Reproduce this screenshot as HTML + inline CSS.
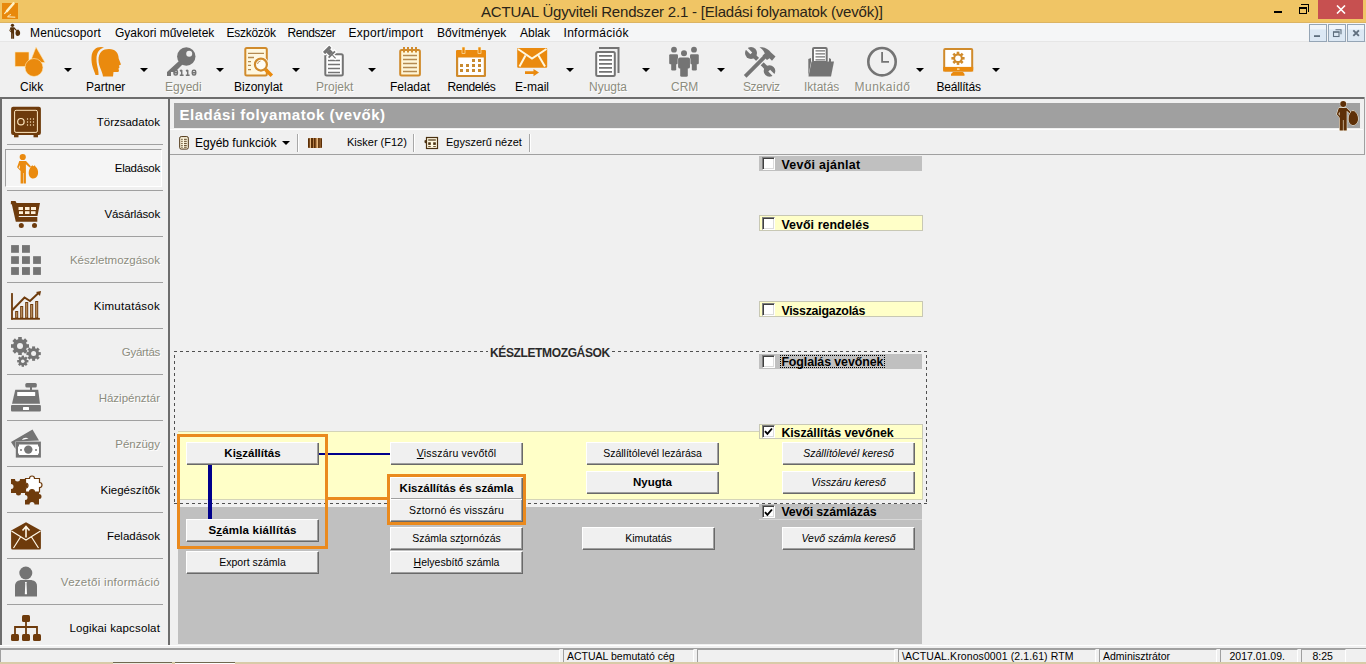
<!DOCTYPE html>
<html><head><meta charset="utf-8"><style>
*{margin:0;padding:0;box-sizing:border-box}
html,body{width:1366px;height:664px;overflow:hidden;background:#f0f0f0;font-family:"Liberation Sans",sans-serif;color:#000}
.a{position:absolute}
.t{position:absolute;white-space:nowrap}
#title{left:0;top:0;width:1366px;height:22px;background:#f0c565}
#menubar{left:0;top:23px;width:1366px;height:18px;background:#f5f6f7}
#toolbar{left:0;top:41px;width:1366px;height:56px;background:#f0f0f0;border-top:1px solid #e6e6e6}
.mi{font-size:12px;top:26px;color:#000}
.tl{font-size:12px;top:80px;color:#000}
.tl.dis{color:#8c8c7e;text-shadow:1px 1px 0 #fff}
.dd{width:0;height:0;border-left:4px solid transparent;border-right:4px solid transparent;border-top:4px solid #000;top:68px}
.mdi{top:24px;width:18px;height:17.5px;background:linear-gradient(#f0f5fa 0,#f0f5fa 25%,#dce8f4 30%,#dce8f4 100%);border:1px solid #95a5b5}
.sb{left:7px;width:156px;height:1px;background:#a0a0a0}
.sl{font-size:11.5px;right:1206px;text-align:right}
.sl.dis{color:#8c8c7e;text-shadow:1px 1px 0 #fff}
.btn{position:absolute;background:#f0f0f0;border-top:1px solid #fff;border-left:1px solid #fff;box-shadow:inset -1px -1px 0 #a0a0a0, 1px 1px 0 #696969;font-size:10.5px;text-align:center;white-space:nowrap;line-height:21px;height:22px}
.btn.b{font-weight:bold;font-size:11.5px}
.btn.i{font-style:italic}
.btn u{text-decoration-thickness:1px;text-underline-offset:1px}
.hdr{position:absolute;left:759px;width:163px;height:16px;font-weight:bold;font-size:12.8px;line-height:15px;padding-left:22px;white-space:nowrap}
.hdr.g{background:#c0c0c0}
.hdr.y{background:#ffffc8;border:1px solid #c8c8b0}
.cb{position:absolute;left:762px;width:13px;height:13px;background:#fff;border-top:1px solid #808080;border-left:1px solid #808080;border-right:1px solid #fff;border-bottom:1px solid #fff;box-shadow:inset 1px 1px 0 #404040, inset -1px -1px 0 #dcdcdc}
.ht{left:781.4px;font-weight:bold;font-size:12.4px;color:#000}
.st{position:absolute;top:649px;height:14px;border-top:1px solid #a0a0a0;border-left:1px solid #a0a0a0;border-right:1px solid #fff;border-bottom:1px solid #fff;font-size:10.5px;line-height:12px;padding-left:3px;white-space:nowrap}
</style></head><body>
<!-- TITLE BAR -->
<div id="title" class="a"></div>
<div class="a" style="left:0;top:22px;width:1366px;height:1px;background:#dcb463"></div>
<div class="a" style="left:2px;top:3px;width:16px;height:16px;background:#e8890c"></div>
<div class="t" style="left:481px;top:2.6px;font-size:15px;letter-spacing:-0.2px;color:#2a2418">ACTUAL Ügyviteli Rendszer 2.1 - [Eladási folyamatok (vevők)]</div>
<div class="a" style="left:1274px;top:11px;width:8px;height:2px;background:#000"></div>
<div class="a" style="left:1299px;top:6.5px;width:8px;height:7px;border:1px solid #000;border-top-width:2px"></div>
<div class="a" style="left:1301px;top:4px;width:8px;height:8px;border-top:1px solid #000;border-right:1px solid #000"></div>
<div class="a" style="left:1318px;top:0;width:45px;height:19px;background:#c75050"></div>
<svg class="a" style="left:1336px;top:5px" width="10" height="9"><path d="M1 0.5L9 8.5M9 0.5L1 8.5" stroke="#fff" stroke-width="1.6"/></svg>
<!-- MENU BAR -->
<div id="menubar" class="a"></div>
<div class="t mi" style="left:30px;letter-spacing:0.15px">Menücsoport</div>
<div class="t mi" style="left:115px">Gyakori műveletek</div>
<div class="t mi" style="left:226.5px;letter-spacing:-0.28px">Eszközök</div>
<div class="t mi" style="left:287.5px;letter-spacing:-0.45px">Rendszer</div>
<div class="t mi" style="left:348.5px;letter-spacing:0.27px">Export/import</div>
<div class="t mi" style="left:437px">Bővítmények</div>
<div class="t mi" style="left:520px">Ablak</div>
<div class="t mi" style="left:563.5px;letter-spacing:0.3px">Információk</div>
<!-- TOOLBAR -->
<div id="toolbar" class="a"></div>
<div class="a mdi" style="left:1309px"></div>
<div class="a mdi" style="left:1328px"></div>
<div class="a mdi" style="left:1347px"></div>
<div class="t tl" style="left:20px">Cikk</div>
<div class="t tl" style="left:86px">Partner</div>
<div class="t tl dis" style="left:165px">Egyedi</div>
<div class="t tl" style="left:234px">Bizonylat</div>
<div class="t tl dis" style="left:316px">Projekt</div>
<div class="t tl" style="left:390px">Feladat</div>
<div class="t tl" style="left:447.5px;letter-spacing:-0.35px">Rendelés</div>
<div class="t tl" style="left:515px">E-mail</div>
<div class="t tl dis" style="left:589px">Nyugta</div>
<div class="t tl dis" style="left:671px">CRM</div>
<div class="t tl dis" style="left:743px;letter-spacing:-0.4px">Szerviz</div>
<div class="t tl dis" style="left:804px">Iktatás</div>
<div class="t tl dis" style="left:854.5px;letter-spacing:0.5px">Munkaidő</div>
<div class="t tl" style="left:936.5px;letter-spacing:-0.2px">Beállítás</div>
<div class="a dd" style="left:64px"></div>
<div class="a dd" style="left:140px"></div>
<div class="a dd" style="left:216px"></div>
<div class="a dd" style="left:292px"></div>
<div class="a dd" style="left:368px"></div>
<div class="a dd" style="left:566px"></div>
<div class="a dd" style="left:642px"></div>
<div class="a dd" style="left:717px"></div>
<div class="a dd" style="left:916px"></div>
<div class="a dd" style="left:992px"></div>
<div class="a" style="left:0;top:97px;width:1365px;height:2px;background:#6d6d6d"></div>
<!-- SIDEBAR -->
<div class="a" style="left:0;top:99px;width:2px;height:546px;background:#6d6d6d"></div>
<div class="a" style="left:168px;top:99px;width:2px;height:546px;background:#6d6d6d"></div>
<div class="a sb" style="top:144px"></div>
<div class="a sb" style="top:190px"></div>
<div class="a sb" style="top:236px"></div>
<div class="a sb" style="top:282px"></div>
<div class="a sb" style="top:328px"></div>
<div class="a sb" style="top:374px"></div>
<div class="a sb" style="top:420px"></div>
<div class="a sb" style="top:466px"></div>
<div class="a sb" style="top:512px"></div>
<div class="a sb" style="top:558px"></div>
<div class="a sb" style="top:604px"></div>
<div class="a" style="left:5px;top:149px;width:157px;height:38px;border-top:1px solid #a0a0a0;border-left:1px solid #a0a0a0;border-right:1px solid #fff;border-bottom:1px solid #fff;background:#f5f5f5"></div>
<div class="t sl" style="top:115.8px">Törzsadatok</div>
<div class="t sl" style="top:161.8px;letter-spacing:-0.26px">Eladások</div>
<div class="t sl" style="top:207.8px;letter-spacing:-0.14px">Vásárlások</div>
<div class="t sl dis" style="top:253.8px">Készletmozgások</div>
<div class="t sl" style="top:299.8px;letter-spacing:0.27px">Kimutatások</div>
<div class="t sl dis" style="top:345.8px;letter-spacing:-0.29px">Gyártás</div>
<div class="t sl dis" style="top:391.8px">Házipénztár</div>
<div class="t sl dis" style="top:437.8px">Pénzügy</div>
<div class="t sl" style="top:483.8px">Kiegészítők</div>
<div class="t sl" style="top:529.8px">Feladások</div>
<div class="t sl dis" style="top:575.8px;letter-spacing:0.29px">Vezetői információ</div>
<div class="t sl" style="top:621.8px;letter-spacing:0.14px">Logikai kapcsolat</div>
<!-- MAIN PANEL -->
<div class="a" style="left:174px;top:103px;width:1186px;height:25px;background:#a0a0a0"></div>
<div class="t" style="left:179.5px;top:106px;font-size:15px;font-weight:bold;color:#fff;letter-spacing:0.52px">Eladási folyamatok (vevők)</div>
<div class="a" style="left:170px;top:154px;width:1195px;height:1px;background:#a0a0a0"></div>
<div class="a" style="left:170px;top:129px;width:1193px;height:1px;background:#fff"></div>
<div class="a" style="left:1364px;top:97px;width:1px;height:58px;background:#a0a0a0"></div>
<div class="t" style="left:195px;top:136px;font-size:12px">Egyéb funkciók</div>
<div class="t" style="left:347px;top:136px;font-size:11px">Kisker (F12)</div>
<div class="t" style="left:446px;top:136px;font-size:11px">Egyszerű nézet</div>
<div class="a dd" style="left:282px;top:141px"></div>
<div class="a" style="left:297px;top:134px;width:1px;height:18px;background:#a8a8a8;box-shadow:1px 0 0 #fff"></div>
<div class="a" style="left:413px;top:134px;width:1px;height:18px;background:#a8a8a8;box-shadow:1px 0 0 #fff"></div>
<div class="a" style="left:529px;top:134px;width:1px;height:18px;background:#a8a8a8;box-shadow:1px 0 0 #fff"></div>
<!-- DIAGRAM -->
<div class="a" style="left:178px;top:431px;width:745px;height:69px;background:#ffffc8;border:1px solid #d4d4b8;border-left:0"></div>
<div class="a" style="left:178px;top:507px;width:744px;height:137px;background:#c0c0c0"></div>
<svg class="a" style="left:0;top:0" width="1366" height="664"><g stroke="#505050" stroke-width="1" stroke-dasharray="3 3">
<path d="M174 351.5 H927"/><path d="M174.5 355 V503"/><path d="M174 503.5 H927"/><path d="M926.5 355 V503"/></g></svg>
<div class="t" style="left:488px;top:346px;font-size:12px;letter-spacing:-0.37px;font-weight:bold;background:#f0f0f0;padding:0 2px;color:#2a2a2a">KÉSZLETMOZGÁSOK</div>
<!-- headers -->
<div class="a" style="left:759px;top:156px;width:163px;height:15px;background:#c0c0c0"></div>
<div class="cb" style="top:157.2px"></div>
<div class="t ht" style="top:157.8px;letter-spacing:0.3px">Vevői ajánlat</div>
<div class="a" style="left:758.5px;top:215px;width:164px;height:16.4px;background:#ffffc8;border:1px solid #c8c8b4"></div>
<div class="cb" style="top:217.0px"></div>
<div class="t ht" style="top:217.8px;letter-spacing:0.07px">Vevői rendelés</div>
<div class="a" style="left:758.5px;top:301px;width:164px;height:16.4px;background:#ffffc8;border:1px solid #c8c8b4"></div>
<div class="cb" style="top:303.0px"></div>
<div class="t ht" style="top:303.8px;letter-spacing:-0.25px">Visszaigazolás</div>
<div class="a" style="left:759px;top:353.7px;width:163px;height:15px;background:#c0c0c0"></div>
<div class="cb" style="top:354.9px"></div>
<div class="t ht" style="top:354.9px;letter-spacing:-0.09px">Foglalás vevőnek</div>
<div class="a" style="left:758.5px;top:423.7px;width:164px;height:15.6px;background:#ffffc8;border:1px solid #c8c8b4"></div>
<div class="cb" style="top:425.2px"></div>
<svg class="a" style="left:764px;top:426.9px" width="9" height="9"><path d="M1 4.2 L3.4 6.8 L8 1.5" stroke="#000" stroke-width="1.9" fill="none"/></svg>
<div class="t ht" style="top:425.9px;letter-spacing:-0.08px">Kiszállítás vevőnek</div>
<div class="a" style="left:759px;top:504px;width:163px;height:16px;background:#c0c0c0;border-bottom:1px solid #d8d8d8"></div>
<div class="cb" style="top:505.4px"></div>
<svg class="a" style="left:764px;top:507.59999999999997px" width="9" height="9"><path d="M1 4.2 L3.4 6.8 L8 1.5" stroke="#000" stroke-width="1.9" fill="none"/></svg>
<div class="t ht" style="top:504.7px;letter-spacing:-0.14px">Vevői számlázás</div>
<div class="a" style="left:780px;top:354.5px;width:105px;height:13.3px;border:1px dotted #000"></div>
<!-- lines -->
<div class="a" style="left:208px;top:465px;width:4px;height:54px;background:#00008c"></div>
<div class="a" style="left:319px;top:453px;width:71px;height:2px;background:#00008c"></div>
<div class="a" style="left:177px;top:434px;width:151px;height:115px;border:3px solid #ea8a1e"></div>
<div class="a" style="left:328px;top:497px;width:60px;height:3px;background:#ea8a1e"></div>
<div class="a" style="left:387px;top:474px;width:139px;height:51px;border:3px solid #ea8a1e"></div>
<!-- buttons -->
<div class="btn b" style="left:186px;top:442px;width:132px">Ki<u>s</u>zállítás</div>
<div class="btn b" style="left:186px;top:519px;width:132px;letter-spacing:0.2px">S<u>z</u>ámla kiállítás</div>
<div class="btn" style="left:186px;top:551px;width:132px">Export számla</div>
<div class="btn" style="left:390px;top:442px;width:132px;letter-spacing:0.2px"><u>V</u>isszáru vevőtől</div>
<div class="btn b" style="left:390px;top:477px;width:132px">Kiszállítás és számla</div>
<div class="btn" style="left:390px;top:499px;width:132px;letter-spacing:0.17px">Sztornó és visszáru</div>
<div class="btn" style="left:390px;top:527px;width:132px">Számla sz<u>t</u>ornózás</div>
<div class="btn" style="left:390px;top:551px;width:132px"><u>H</u>elyesbítő számla</div>
<div class="btn" style="left:586px;top:442px;width:132px">Szállítólevél lezárása</div>
<div class="btn b" style="left:586px;top:471px;width:132px">Nyugta</div>
<div class="btn" style="left:582px;top:527px;width:132px">Kimutatás</div>
<div class="btn i" style="left:782px;top:442px;width:132px">Szállítólevél kereső</div>
<div class="btn i" style="left:782px;top:471px;width:132px">Visszáru kereső</div>
<div class="btn i" style="left:782px;top:527px;width:132px">Vevő számla kereső</div>
<!-- STATUS BAR -->
<div class="a" style="left:0;top:645px;width:1366px;height:1px;background:#fff"></div>
<div class="a" style="left:0;top:648px;width:1366px;height:1px;background:#a0a0a0"></div>
<div class="st" style="left:0;width:560px"></div>
<div class="st" style="left:563px;width:131px">ACTUAL bemutató cég</div>
<div class="st" style="left:697px;width:198px"></div>
<div class="st" style="left:898px;width:198px;letter-spacing:0.1px">\ACTUAL.Kronos0001 (2.1.61) RTM</div>
<div class="st" style="left:1099px;width:118px">Adminisztrátor</div>
<div class="st" style="left:1220px;width:78px;padding-left:8.5px">2017.01.09.</div>
<div class="st" style="left:1301px;width:45px;padding-left:10.5px">8:25</div>
<div class="a" style="left:0;top:662px;width:1366px;height:2px;background:#d8cba8"></div>
<div class="a" style="left:113px;top:662px;width:59px;height:2px;background:#eeeae0;border-top:1px solid #706850"></div>
<div class="a" style="left:175px;top:662px;width:60px;height:2px;background:#fff;border-top:1px solid #706850"></div>
<svg class="a" style="left:0;top:0" width="1366" height="664" viewBox="0 0 1366 664">
<!-- app icon -->
<rect x="2" y="3" width="16" height="16" fill="#e8890c"/>
<path d="M13.5 3.5 L7 11" stroke="#fff3c8" stroke-width="2.6" stroke-linecap="round"/>
<path d="M7 11 L4.3 13.8" stroke="#fff3c8" stroke-width="1.1"/>
<path d="M7.2 16.8 L15.3 17.2 M8 16.3 Q9.5 15 11 14.5" stroke="#fff3c8" stroke-width="1" fill="none"/>
<!-- menubar man -->
<g transform="translate(1.1,-53.2) scale(0.5)" fill="#55300a">
<circle cx="22.75" cy="157" r="3.3"/>
<path d="M18.8 161 h7.5 l5 5.5 l-1.5 1.3 l-3.8 -3.3 v19.5 h-2.8 v-10.5 h-0.4 v10.5 h-2.8 v-12.5 l-3.5 -3.8 l2.3 -6.7 z M19.8 165 l-1.2 2.6 l1.2 1.4 z" fill-rule="evenodd"/>
<path d="M31 166.5 l1.3 -1.3 l1.2 1 l1.3 -1 l0.8 1.5 C37.5 168 38.5 171 38 174 C37.5 177 35 178.5 33 178.5 C30.5 178.5 28.7 176 28.7 173 C28.7 170 30 168 31 166.5 Z"/>
</g>
<!-- mdi buttons -->
<rect x="1314" y="35.2" width="6" height="1.8" fill="#5f6f7f"/>
<rect x="1333.5" y="32" width="5.5" height="4.5" fill="none" stroke="#5f6f7f" stroke-width="1.1"/>
<rect x="1333" y="31.4" width="6.5" height="1.2" fill="#5f6f7f"/>
<path d="M1335.5 29.8 h5.5 v4.5" fill="none" stroke="#5f6f7f" stroke-width="1.1"/>
<path d="M1353.3 30.3 l5.6 5.6 M1358.9 30.3 l-5.6 5.6" stroke="#5f6f7f" stroke-width="1.9"/>
<!-- TOOLBAR ICONS -->
<!-- Cikk -->
<g fill="#ea8a0e" stroke="#ffe9b8" stroke-width="0.6">
<rect x="15" y="52" width="14" height="14.5"/>
<path d="M36 47 L45 62.5 L30 62.5 Z"/>
<circle cx="34" cy="67.5" r="9"/>
</g>
<!-- Partner -->
<g fill="#ea8a0e">
<path d="M95.5 75 C94 70 91 65 91.5 57 C92 50 96 47 101 47 L104 47.5 C99 49 96.5 53 96.5 59 C96.5 66 99 70 98.5 75 Z"/>
<path d="M103 76.6 C102.5 71 98.5 67 98.5 60 C98.5 52 103 49 109 49 C115.5 49 118.5 53 118.7 58.5 L121 64.5 L119 65.5 L119.5 67.5 L118.5 68.5 L119 71 C118.5 72.5 116 72 113.5 72 L113 76.6 Z"/>
</g>
<!-- Egyedi key -->
<g fill="#747474">
<circle cx="186.3" cy="56.5" r="9.2"/>
<path d="M179 61 L167 72 L167 76 L171 76 L171 72 L175 72 L183 64 Z"/>
</g>
<circle cx="189.2" cy="53.7" r="3" fill="#f0f0f0"/>
<g fill="none" stroke="#747474" stroke-width="1.5">
<rect x="174" y="70.3" width="3.4" height="4.8" rx="1.5"/><rect x="192.3" y="70.3" width="3.4" height="4.8" rx="1.5"/>
<path d="M174 72.7 h3.4 M192.3 72.7 h3.4 M181.7 70 v5.5 M180 71 l1.7 -1 M179.8 75.3 h3.8 M187.7 70 v5.5 M186 71 l1.7 -1 M185.8 75.3 h3.8"/>
</g>
<!-- Bizonylat -->
<rect x="245.3" y="47.9" width="21.5" height="27.7" rx="1.5" fill="#fff8e0" stroke="#d08b2c" stroke-width="2"/>
<g stroke="#b48a50" stroke-width="1.3"><path d="M248 53.4 h16 M248 57.5 h6 M248 61.6 h3 M248 65.4 h3 M248 69.7 h3"/></g>
<circle cx="260.9" cy="64.6" r="8" fill="#fff8e8"/>
<path d="M265.3 69.3 L271.8 75.8" stroke="#ea8a0e" stroke-width="3.6"/>
<circle cx="260.9" cy="64.6" r="6" fill="#fffdf5" stroke="#d08b2c" stroke-width="2.2"/>
<path d="M257.5 64 A3.5 3.5 0 0 1 260.5 61" stroke="#b48a50" stroke-width="0.9" fill="none"/>
<!-- Projekt -->
<rect x="325.3" y="54.2" width="17.5" height="21.4" rx="1.5" fill="#fff" stroke="#747474" stroke-width="2"/>
<g stroke="#747474" stroke-width="1.5"><path d="M328 60.5 h12 M328 64.5 h12 M328 68.5 h12 M328 72.5 h12"/></g>
<g transform="translate(330.3,53) rotate(-45)" fill="#fff" stroke="#fff" stroke-width="2.4"><rect x="-4.5" y="-6" width="9" height="3.2" rx=".6"/><rect x="-2.6" y="-3.2" width="5.2" height="4.6"/><rect x="-4.5" y="1.2" width="9" height="1.8"/><rect x="-.6" y="3" width="1.2" height="4.5"/></g>
<g transform="translate(330.3,53) rotate(-45)" fill="#747474"><rect x="-4.5" y="-6" width="9" height="3.2" rx=".6"/><rect x="-2.6" y="-3.2" width="5.2" height="4.6"/><rect x="-4.5" y="1.2" width="9" height="1.8"/><rect x="-.6" y="3" width="1.2" height="4.5"/></g>
<!-- Feladat -->
<rect x="400.2" y="49.9" width="19.7" height="25.7" rx="1.5" fill="#fff6d8" stroke="#d08b2c" stroke-width="2"/>
<g stroke="#b48a50" stroke-width="1.6"><path d="M403 55.5 h14 M403 59.5 h14 M403 63.5 h14 M403 67.5 h14 M403 71.5 h14"/></g>
<g fill="#d08b2c"><rect x="403" y="47" width="2" height="5.5"/><rect x="407" y="47" width="2" height="5.5"/><rect x="411" y="47" width="2" height="5.5"/><rect x="415" y="47" width="2" height="5.5"/></g>
<!-- Rendelés -->
<rect x="456" y="50" width="30" height="27" rx="1.5" fill="#d08b2c"/>
<rect x="456" y="50" width="30" height="7.5" rx="1.5" fill="#ea8a0e"/>
<rect x="458.2" y="57.5" width="25.6" height="17.5" fill="#fff"/>
<g fill="#ea8a0e"><rect x="462" y="47" width="3" height="6.5" stroke="#fff3d0" stroke-width="0.6"/><rect x="478" y="47" width="3" height="6.5" stroke="#fff3d0" stroke-width="0.6"/></g>
<g fill="#c88a30"><rect x="472" y="59" width="3" height="3"/><rect x="478" y="59" width="3" height="3"/><rect x="460" y="64" width="3" height="3"/><rect x="466" y="64" width="3" height="3"/><rect x="472" y="64" width="3" height="3"/><rect x="478" y="64" width="3" height="3"/><rect x="460" y="69" width="3" height="3"/><rect x="466" y="69" width="3" height="3"/><rect x="472" y="69" width="3" height="3"/><rect x="478" y="69" width="3" height="3"/></g>
<!-- E-mail -->
<rect x="517.2" y="48" width="30" height="19.7" rx="1" fill="#ea8a0e"/>
<path d="M518 49 L532 58.5 L546.5 49 M519.5 66.5 L525.5 55.5 M538.5 55.5 L545 66.5" stroke="#fff8e0" stroke-width="2" fill="none"/>
<path d="M525 71.2 h8.5 v-2.2 l5.5 3.6 l-5.5 3.6 v-2.2 h-8.5 z" fill="#ea8a0e"/>
<!-- Nyugta -->
<path d="M599 48 h19.5 v25" fill="none" stroke="#747474" stroke-width="2"/>
<rect x="596.2" y="51.9" width="18.6" height="24" rx="1.5" fill="#fff" stroke="#747474" stroke-width="2"/>
<g stroke="#747474" stroke-width="1.7"><path d="M599 55.8 h13 M599 59.8 h13 M599 63.8 h13 M599 67.8 h13 M599 71.8 h13"/></g>
<!-- CRM -->
<g fill="#747474">
<circle cx="674" cy="49.7" r="2.9"/><circle cx="694" cy="49.7" r="2.9"/>
<rect x="669.2" y="54.2" width="8.8" height="10" rx="1.2"/><rect x="671.2" y="61" width="5" height="9.6" rx="1.3"/>
<rect x="690" y="54.2" width="8.8" height="10" rx="1.2"/><rect x="691.8" y="61" width="5" height="9.6" rx="1.3"/>
</g>
<g fill="#747474" stroke="#f0f0f0" stroke-width="1.3" paint-order="stroke">
<circle cx="684" cy="53.3" r="3"/>
<rect x="678.3" y="57.5" width="11.5" height="11" rx="1.6"/>
</g>
<rect x="680.2" y="66" width="7.6" height="10.8" rx="1.5" fill="#747474"/>
<rect x="678.3" y="58.2" width="11.5" height="9.5" rx="1.2" fill="#747474"/>
<!-- Szerviz -->
<g fill="#747474">
<circle cx="751" cy="53" r="6"/>
<circle cx="769.5" cy="71" r="5.8"/>
</g>
<path d="M751 53 L769.5 71" stroke="#747474" stroke-width="4.2"/>
<path d="M751.3 53.3 L744 46 M769.2 70.7 L776.5 78" stroke="#f0f0f0" stroke-width="2.6"/>
<path d="M746.5 75 L766 55.5" stroke="#f0f0f0" stroke-width="6.5"/>
<path d="M746.5 75 L766 55.5" stroke="#747474" stroke-width="3.8" stroke-linecap="square"/>
<path d="M759.5 47.3 C764 47 768.5 49 771 52.5 L775.5 56.5 L772 60.8 L769.5 58.3 L767 60 L762.5 55.5 L764.8 53.5 C764 51 762 48.8 759.5 47.3 Z" fill="#747474"/>
<!-- Iktatás -->
<rect x="813" y="48" width="13.7" height="14" rx="1" fill="#fff" stroke="#747474" stroke-width="2"/>
<g stroke="#747474" stroke-width="1.2"><path d="M815.5 50.8 h9.5 M815.5 53.8 h9.5 M815.5 56.8 h9.5 M815.5 59.8 h9.5"/></g>
<g fill="#747474">
<path d="M808.3 59 L811 58 L811 62 L808.3 76.5 Z"/>
<path d="M829 58 L831 59 L831 62 L829 62 Z"/>
<path d="M811.5 61.5 L834 61.5 L831 76.5 L808.5 76.5 Z"/>
</g>
<!-- Munkaidő -->
<circle cx="882" cy="61.7" r="13.7" fill="none" stroke="#747474" stroke-width="2.6"/>
<path d="M882.1 52 V61.9 H889" fill="none" stroke="#747474" stroke-width="1.8"/>
<!-- Beállítás -->
<rect x="944.2" y="49" width="28" height="21.5" rx="1" fill="#fff" stroke="#d08b2c" stroke-width="2"/>
<rect x="943.2" y="66.9" width="30" height="4.6" fill="#ea8a0e"/>
<rect x="957" y="68.5" width="2.5" height="1.2" fill="#fff3d0"/>
<path d="M953 72 h10 l1.5 2 v1.8 h-13.5 v-1.8 z" fill="#ea8a0e"/>
<g transform="translate(958,58.3)" fill="#d08b2c">
<circle r="4.8"/>
<rect x="-1.3" y="-6.6" width="2.6" height="13.2"/><rect x="-6.6" y="-1.3" width="13.2" height="2.6"/>
<rect x="-1.3" y="-6.6" width="2.6" height="13.2" transform="rotate(45)"/><rect x="-6.6" y="-1.3" width="13.2" height="2.6" transform="rotate(45)"/>
</g>
<circle cx="958" cy="58.3" r="2.8" fill="#fff"/>
<!-- SIDEBAR ICONS -->
<!-- safe -->
<rect x="11.1" y="106.8" width="29.8" height="28.1" rx="2" fill="#6e3b0c"/>
<rect x="14" y="134" width="4.5" height="3.3" fill="#6e3b0c"/><rect x="33.5" y="134" width="4.5" height="3.3" fill="#6e3b0c"/>
<rect x="14.6" y="110.3" width="22.8" height="22.1" rx="1.5" fill="none" stroke="#ffe8c0" stroke-width="1"/>
<circle cx="20.9" cy="121.7" r="3.2" fill="none" stroke="#ffe8c0" stroke-width="1.2"/>
<g fill="#ffe8c0"><circle cx="27.5" cy="119" r=".7"/><circle cx="30.5" cy="119" r=".7"/><circle cx="33.5" cy="119" r=".7"/><circle cx="27.5" cy="122" r=".7"/><circle cx="30.5" cy="122" r=".7"/><circle cx="33.5" cy="122" r=".7"/><circle cx="27.5" cy="125" r=".7"/><circle cx="30.5" cy="125" r=".7"/><circle cx="33.5" cy="125" r=".7"/></g>
<!-- Eladások man -->
<g fill="#ea8a0e">
<circle cx="22.75" cy="157" r="3.1"/>
<path d="M19.3 161 h6.7 l5 5.5 l-1.3 1.1 l-3.8 -3.3 v19.2 h-2.4 v-10.5 h-0.5 v10.5 h-2.4 v-12.5 l-3.5 -3.8 l2.2 -6.2 z M19.8 165 l-1.2 2.6 l1.2 1.4 z" fill-rule="evenodd"/>
<path d="M31 166.5 l1.3 -1.3 l1.2 1 l1.3 -1 l0.8 1.5 C37.5 168 38.5 171 38 174 C37.5 177 35 178.5 33 178.5 C30.5 178.5 28.7 176 28.7 173 C28.7 170 30 168 31 166.5 Z"/>
</g>
<!-- cart -->
<g fill="#6e3b0c">
<path d="M11 201 h4.5 l1 2 h23.5 l-2.5 13 h-19 l0.5 1 h18.3 v4.8 h-21.5 l-4 -17.5 h-1 z"/>
<circle cx="21.3" cy="225.4" r="2.5"/><circle cx="34.5" cy="225.4" r="2.5"/>
</g>
<g fill="#fff0d8"><rect x="18.5" y="207" width="4.5" height="3"/><rect x="25" y="207" width="4.5" height="3"/><rect x="31" y="207" width="5" height="3"/><rect x="19" y="211.2" width="4" height="2.8"/><rect x="25" y="211.2" width="4.5" height="2.8"/><rect x="31" y="211.2" width="4.5" height="2.8"/></g>
<!-- grid -->
<g fill="#747474"><rect x="11.1" y="245.1" width="7.8" height="7.7"/><rect x="22" y="245.1" width="7.9" height="7.7"/>
<rect x="11.1" y="256.2" width="7.8" height="7.7"/><rect x="22" y="256.2" width="7.9" height="7.7"/><rect x="33.1" y="256.2" width="7.8" height="7.7"/>
<rect x="11.1" y="267.1" width="7.8" height="7.8"/><rect x="22" y="267.1" width="7.9" height="7.8"/><rect x="33.1" y="267.1" width="7.8" height="7.8"/></g>
<!-- chart -->
<g fill="#6e3b0c">
<rect x="11.1" y="293.1" width="1.8" height="26.5"/><rect x="11.1" y="317.9" width="28.8" height="1.8"/>
</g>
<g fill="#c8a070" stroke="#6e3b0c" stroke-width="1"><rect x="15.7" y="311.5" width="2" height="6.5"/><rect x="20.7" y="306.5" width="2" height="11.5"/><rect x="25.7" y="302.5" width="2" height="15.5"/><rect x="30.7" y="304.5" width="2" height="13.5"/><rect x="35.7" y="301.5" width="2" height="16.5"/></g>
<path d="M12.5 310 L24.5 297.5 L30 301 L38.5 293" fill="none" stroke="#6e3b0c" stroke-width="2"/>
<path d="M36 292 L41 291 L40 296 Z" fill="#6e3b0c"/>
<!-- gears -->
<g fill="#747474">
<g transform="translate(20,346)"><circle r="7"/><g id="t8"><rect x="-1.8" y="-9" width="3.6" height="18"/><rect x="-9" y="-1.8" width="18" height="3.6"/><rect x="-1.8" y="-9" width="3.6" height="18" transform="rotate(45)"/><rect x="-9" y="-1.8" width="18" height="3.6" transform="rotate(45)"/></g></g>
<g transform="translate(33.6,353.6)"><circle r="5.5"/><rect x="-1.5" y="-7.2" width="3" height="14.4"/><rect x="-7.2" y="-1.5" width="14.4" height="3"/><rect x="-1.5" y="-7.2" width="3" height="14.4" transform="rotate(45)"/><rect x="-7.2" y="-1.5" width="14.4" height="3" transform="rotate(45)"/></g>
<g transform="translate(22.8,361.2)"><circle r="4.2"/><rect x="-1.2" y="-5.6" width="2.4" height="11.2"/><rect x="-5.6" y="-1.2" width="11.2" height="2.4"/><rect x="-1.2" y="-5.6" width="2.4" height="11.2" transform="rotate(45)"/><rect x="-5.6" y="-1.2" width="11.2" height="2.4" transform="rotate(45)"/></g>
</g>
<g fill="#f0f0f0"><circle cx="20" cy="346" r="3"/><circle cx="33.6" cy="353.6" r="2.5"/><circle cx="22.8" cy="361.2" r="1.8"/></g>
<!-- cash register -->
<g fill="#747474">
<rect x="25.3" y="383.1" width="11.5" height="4.4" rx="1.5"/><rect x="30" y="387" width="2" height="3"/>
<path d="M15.3 389.7 h22.9 l1.8 14.1 h-28 z"/>
<rect x="11" y="405.1" width="29.9" height="6.5" rx="1"/>
</g>
<rect x="17.2" y="392" width="18" height="4" rx=".5" fill="#fff"/><rect x="23" y="407" width="6" height="3" rx=".5" fill="#fff"/>
<!-- money -->
<path d="M11 442 L32.5 429.5 L39 440.5 L15.5 441.5 L15.5 449 Z" fill="#747474"/>
<path d="M22 440 C23 438 26 437 28.5 438.5 Z" fill="#fff"/>
<rect x="15.8" y="441.6" width="25.1" height="16" fill="#747474"/>
<path d="M19 444.5 h19 a2.5 2.5 0 0 0 1 2.5 v6 a2.5 2.5 0 0 0 -1 2 h-19 a2.5 2.5 0 0 0 -1 -2 v-6 a2.5 2.5 0 0 0 1 -2.5 z" fill="#fff"/>
<circle cx="28.3" cy="449.6" r="4.2" fill="#747474"/><circle cx="21" cy="450" r="1" fill="#747474"/><circle cx="36" cy="450" r="1" fill="#747474"/>
<!-- puzzle -->
<g fill="#6e3b0c">
<path d="M11 479 h4 a2.5 2.5 0 0 0 5 0 h5 v4 a2.5 2.5 0 0 1 0 5 v5 h-4 a2.5 2.5 0 0 1 -5 0 h-5 v-4 a2.5 2.5 0 0 0 0 -5 z"/>
<path d="M25 489 h4 a2.5 2.5 0 0 1 5 0 h5 v5 a2.5 2.5 0 0 1 0 5 v5.5 h-4.5 a2.5 2.5 0 0 0 -5 0 h-4.5 v-4.5 a2.5 2.5 0 0 0 0 -5 z"/>
</g>
<path d="M25.5 478.5 h4 a2.5 2.5 0 0 1 5 0 h5 v4 a2.5 2.5 0 0 1 0 5 v4.5 h-5 a2.5 2.5 0 0 0 -5 0 h-4 v-4 a2.5 2.5 0 0 0 0 -5 z" fill="#fff" stroke="#6e3b0c" stroke-width="1.2"/>
<!-- feladások envelope -->
<path d="M11.1 530.5 L26 522.3 L40.9 530.5 V548 a1.5 1.5 0 0 1 -1.5 1.5 H12.6 a1.5 1.5 0 0 1 -1.5 -1.5 Z" fill="#6e3b0c"/>
<path d="M11.5 531 L26 540 L40.5 531 M13.5 548 L20.5 537 M31.5 537 L38.5 548" stroke="#fff8e8" stroke-width="1.2" fill="none"/>
<path d="M26 537.5 V527 M22.5 530.5 L26 526.5 L29.5 530.5" stroke="#fff8e8" stroke-width="1.6" fill="none"/>
<!-- vezetői -->
<g fill="#747474"><circle cx="25.8" cy="573" r="6.5"/><path d="M15 596.5 V586 C15 582 18 580 22 580 H30 C34 580 37 582 37 586 V596.5 Z"/></g>
<path d="M25 582 h1.8 l-.3 1.5 l.5 10.8 h-2.2 l.5 -10.8 z" fill="#fff"/>
<!-- logikai -->
<g fill="#6e3b0c">
<rect x="22" y="615" width="8" height="7" rx="1.5"/>
<rect x="11" y="634" width="8" height="7" rx="1.5"/><rect x="22" y="634" width="8" height="7" rx="1.5"/><rect x="33" y="634" width="8" height="7" rx="1.5"/>
</g>
<path d="M26 622 V634 M15 634 V627 H37 V634" fill="none" stroke="#6e3b0c" stroke-width="1.8"/>
<!-- main panel: top-right man -->
<g fill="#5e3008" stroke="#fff6e0" stroke-width="1" paint-order="stroke">
<circle cx="1343.2" cy="104.1" r="3"/>
<path d="M1338.8 108 h7.8 l4.5 4.5 l-1.2 1.3 l-3.2 -3 v19.8 h-3.2 v-10.5 h-0.6 v10.5 h-3.2 v-12.8 l-2.9 -3.6 l2 -6.2 z M1339.6 111.8 l-1.2 2.3 l1.2 1.6 z" fill-rule="evenodd"/>
<path d="M1351 111.8 l1 -1.2 l1 .8 l1 -.8 l.8 1.2 C1357 113 1358.2 116 1358 119.5 C1357.8 123 1355.5 125 1353.2 125 C1350.5 125 1348.6 122.5 1348.6 119 C1348.6 116 1349.8 113.5 1351 111.8 Z"/>
</g>
<!-- strip icons -->
<rect x="179.7" y="136.6" width="8.6" height="12.5" rx="1.5" fill="#fff8e0" stroke="#4a3010" stroke-width="1"/>
<g stroke="#4a3010" stroke-width="0.9"><path d="M181.2 139.3 h1.5 M184 139.3 h2.8 M181.2 141.3 h1.5 M184 141.3 h2.8 M181.2 143.4 h1.5 M184 143.4 h2.8 M181.2 145.4 h1.5 M184 145.4 h2.8 M181.2 147.2 h1.5 M184 147.2 h2.8"/></g>
<rect x="308" y="138" width="14" height="10" rx="1.5" fill="#b07a44"/>
<g fill="#5a2e06"><rect x="308" y="138.3" width="1.6" height="9.4"/><rect x="311" y="138" width="2" height="10"/><rect x="314" y="138" width="1.6" height="10"/><rect x="318.2" y="138" width="1.4" height="10"/><rect x="320.6" y="138.3" width="1.4" height="9.4"/></g>
<g fill="#f0c890"><rect x="310" y="138" width=".8" height="10"/><rect x="316.8" y="138" width="1" height="10"/></g>
<rect x="426.5" y="137.5" width="11" height="11" fill="#fff8e0" stroke="#4a3010" stroke-width="1.2"/>
<rect x="428.2" y="139.4" width="7.6" height="1.2" fill="#4a3010"/><rect x="428.2" y="142.3" width="2.6" height="2.6" fill="#4a3010"/><rect x="433.2" y="142.3" width="2.6" height="2.6" fill="#4a3010"/>
<rect x="428.2" y="146" width="2.6" height=".8" fill="#4a3010"/><rect x="433.2" y="146" width="2.6" height=".8" fill="#4a3010"/>
<path d="M426 140 l-1.5 .5 v2 l1.5 1" fill="#4a3010"/>
</svg>
</body></html>
